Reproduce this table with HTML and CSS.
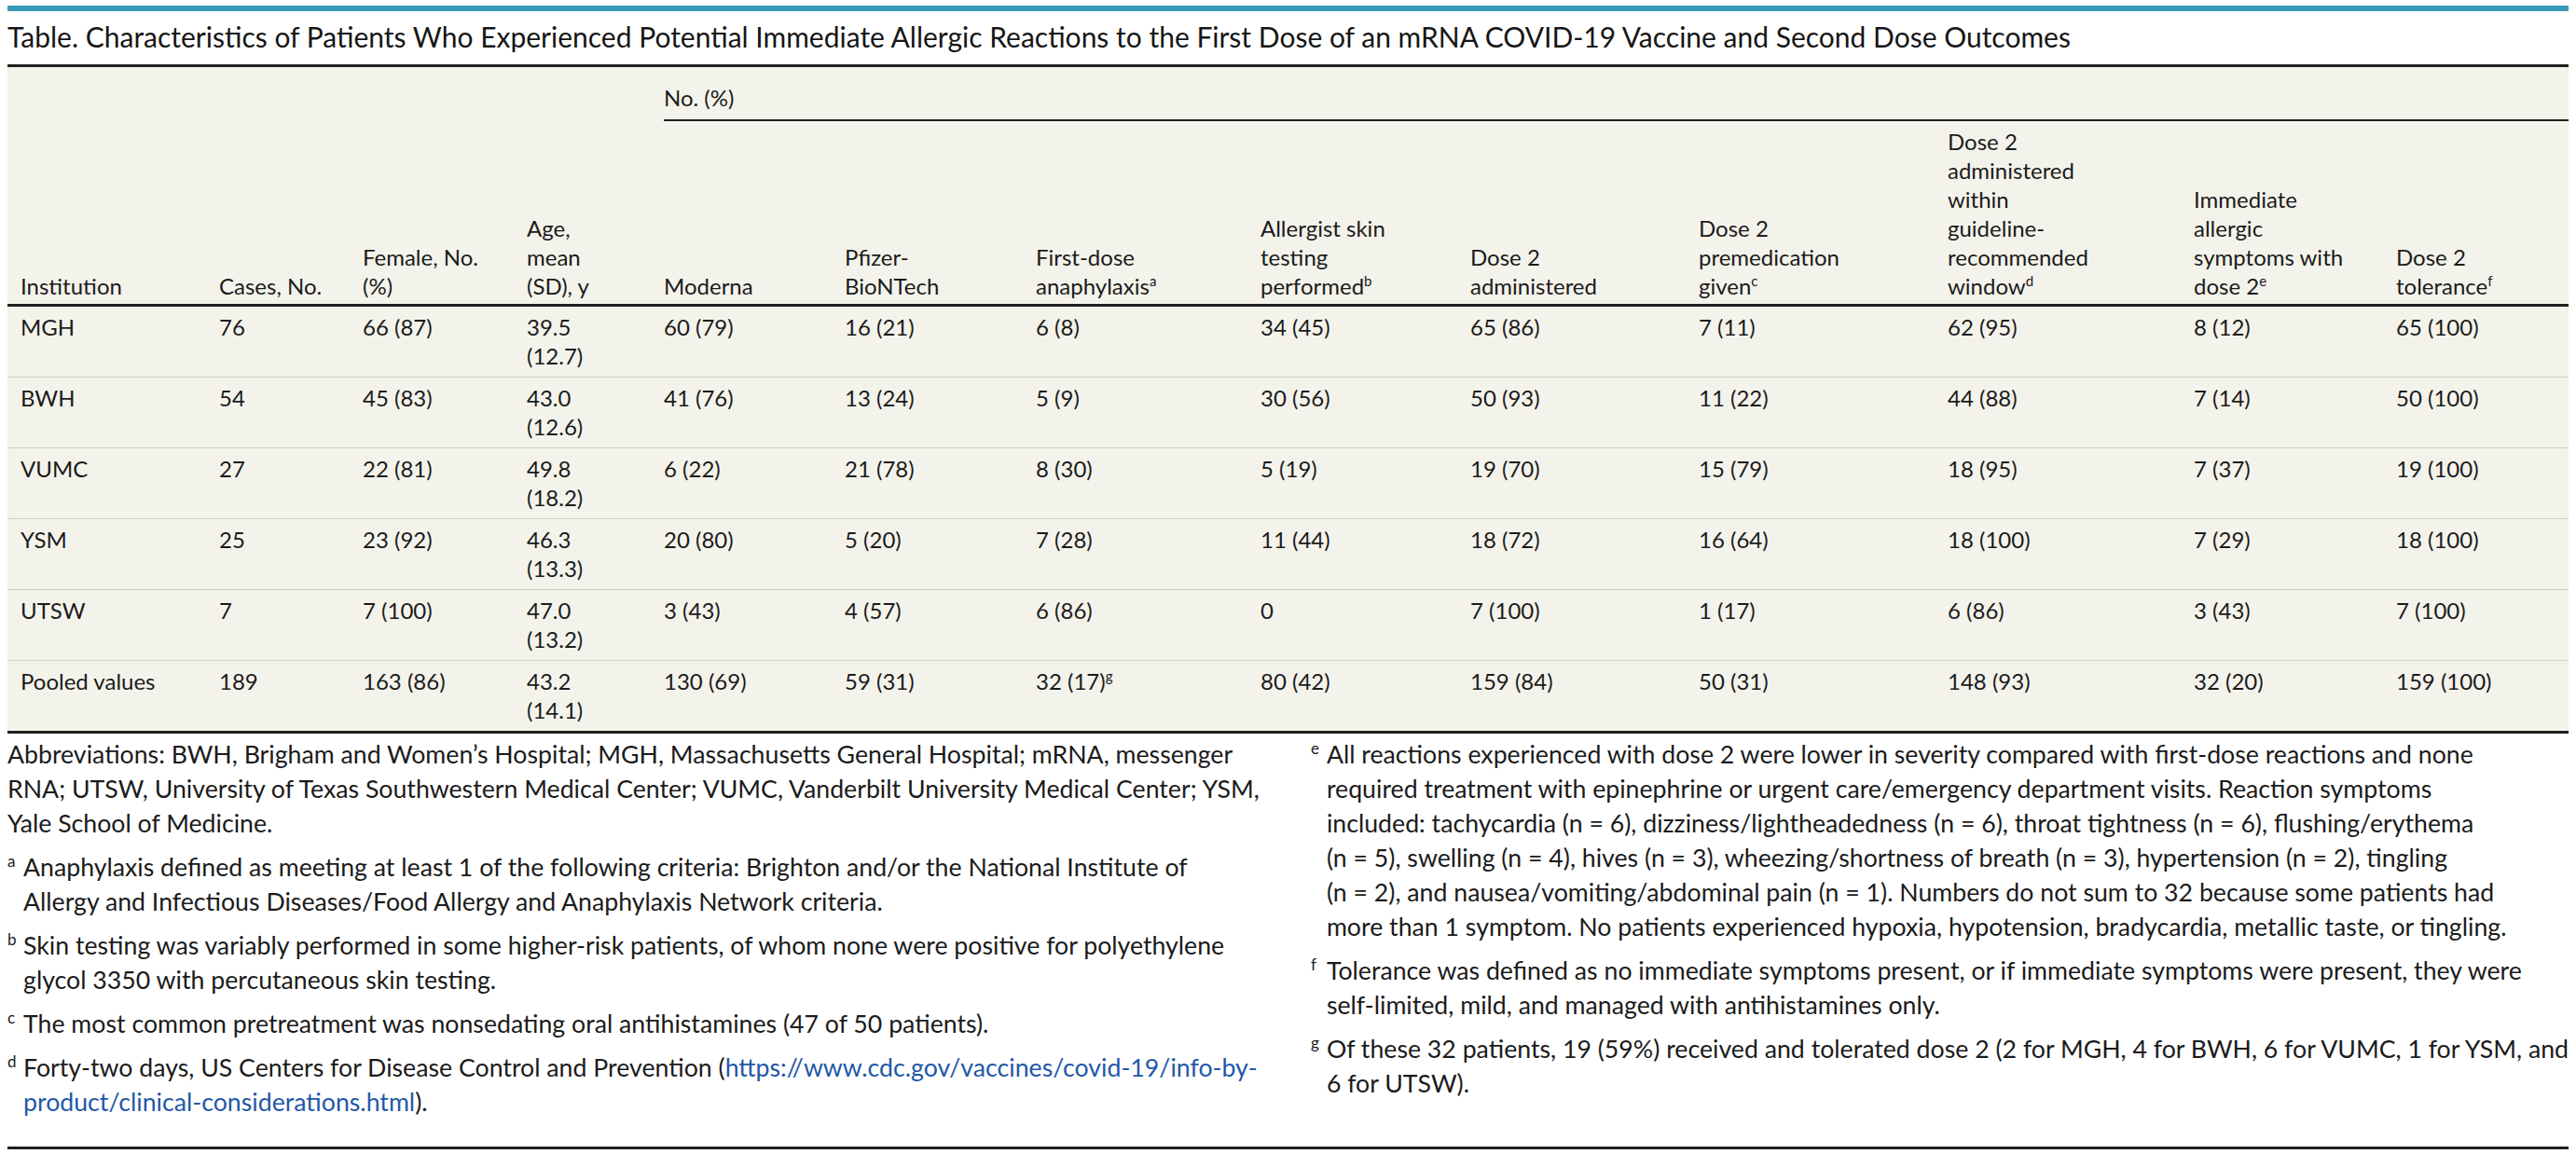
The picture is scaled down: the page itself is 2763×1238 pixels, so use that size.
FILE: index.html
```html
<!DOCTYPE html>
<html lang="en">
<head>
<meta charset="utf-8">
<title>Table</title>
<link rel="stylesheet" href="styles.css">
</head>
<body>
<div class="topbar"></div>
<h1 class="title">Table. Characteristics of Patients Who Experienced Potential Immediate Allergic Reactions to the First Dose of an mRNA COVID-19 Vaccine and Second Dose Outcomes</h1>
<table class="data">
  <colgroup>
    <col class="c-inst">
    <col class="c-cases">
    <col class="c-female">
    <col class="c-age">
    <col class="c-mod">
    <col class="c-pfz">
    <col class="c-ana">
    <col class="c-skin">
    <col class="c-d2">
    <col class="c-pre">
    <col class="c-win">
    <col class="c-imm">
    <col class="c-tol">
  </colgroup>
  <thead>
    <tr class="group-row">
      <th></th><th></th><th></th><th></th>
      <th class="group" colspan="9">No. (%)</th>
    </tr>
    <tr class="head-row">
      <th>Institution</th>
      <th>Cases, No.</th>
      <th>Female, No.<br>(%)</th>
      <th>Age,<br>mean<br>(SD), y</th>
      <th>Moderna</th>
      <th>Pfizer-<br>BioNTech</th>
      <th>First-dose<br>anaphylaxis<sup>a</sup></th>
      <th>Allergist skin<br>testing<br>performed<sup>b</sup></th>
      <th>Dose 2<br>administered</th>
      <th>Dose 2<br>premedication<br>given<sup>c</sup></th>
      <th>Dose 2<br>administered<br>within<br>guideline-<br>recommended<br>window<sup>d</sup></th>
      <th>Immediate<br>allergic<br>symptoms with<br>dose 2<sup>e</sup></th>
      <th>Dose 2<br>tolerance<sup>f</sup></th>
    </tr>
  </thead>
  <tbody>
    <tr>
      <td>MGH</td><td>76</td><td>66 (87)</td><td>39.5<br>(12.7)</td><td>60 (79)</td><td>16 (21)</td><td>6 (8)</td><td>34 (45)</td><td>65 (86)</td><td>7 (11)</td><td>62 (95)</td><td>8 (12)</td><td>65 (100)</td>
    </tr>
    <tr>
      <td>BWH</td><td>54</td><td>45 (83)</td><td>43.0<br>(12.6)</td><td>41 (76)</td><td>13 (24)</td><td>5 (9)</td><td>30 (56)</td><td>50 (93)</td><td>11 (22)</td><td>44 (88)</td><td>7 (14)</td><td>50 (100)</td>
    </tr>
    <tr>
      <td>VUMC</td><td>27</td><td>22 (81)</td><td>49.8<br>(18.2)</td><td>6 (22)</td><td>21 (78)</td><td>8 (30)</td><td>5 (19)</td><td>19 (70)</td><td>15 (79)</td><td>18 (95)</td><td>7 (37)</td><td>19 (100)</td>
    </tr>
    <tr>
      <td>YSM</td><td>25</td><td>23 (92)</td><td>46.3<br>(13.3)</td><td>20 (80)</td><td>5 (20)</td><td>7 (28)</td><td>11 (44)</td><td>18 (72)</td><td>16 (64)</td><td>18 (100)</td><td>7 (29)</td><td>18 (100)</td>
    </tr>
    <tr>
      <td>UTSW</td><td>7</td><td>7 (100)</td><td>47.0<br>(13.2)</td><td>3 (43)</td><td>4 (57)</td><td>6 (86)</td><td>0</td><td>7 (100)</td><td>1 (17)</td><td>6 (86)</td><td>3 (43)</td><td>7 (100)</td>
    </tr>
    <tr>
      <td>Pooled values</td><td>189</td><td>163 (86)</td><td>43.2<br>(14.1)</td><td>130 (69)</td><td>59 (31)</td><td>32 (17)<sup>g</sup></td><td>80 (42)</td><td>159 (84)</td><td>50 (31)</td><td>148 (93)</td><td>32 (20)</td><td>159 (100)</td>
    </tr>
  </tbody>
</table>
<div class="notes">
  <div class="notes-col">
    <p class="abbr">Abbreviations: BWH, Brigham and Women’s Hospital; MGH, Massachusetts General Hospital; mRNA, messenger<br>RNA; UTSW, University of Texas Southwestern Medical Center; VUMC, Vanderbilt University Medical Center; YSM,<br>Yale School of Medicine.</p>
    <p class="fn"><span class="mark">a</span>Anaphylaxis defined as meeting at least 1 of the following criteria: Brighton and/or the National Institute of<br>Allergy and Infectious Diseases/Food Allergy and Anaphylaxis Network criteria.</p>
    <p class="fn"><span class="mark">b</span>Skin testing was variably performed in some higher-risk patients, of whom none were positive for polyethylene<br>glycol 3350 with percutaneous skin testing.</p>
    <p class="fn"><span class="mark">c</span>The most common pretreatment was nonsedating oral antihistamines (47 of 50 patients).</p>
    <p class="fn"><span class="mark">d</span>Forty-two days, US Centers for Disease Control and Prevention (<a class="link" href="#">https://www.cdc.gov/vaccines/covid-19/info-by-<br>product/clinical-considerations.html</a>).</p>
  </div>
  <div class="notes-col">
    <p class="fn"><span class="mark">e</span>All reactions experienced with dose 2 were lower in severity compared with first-dose reactions and none<br>required treatment with epinephrine or urgent care/emergency department visits. Reaction symptoms<br>included: tachycardia (n = 6), dizziness/lightheadedness (n = 6), throat tightness (n = 6), flushing/erythema<br>(n = 5), swelling (n = 4), hives (n = 3), wheezing/shortness of breath (n = 3), hypertension (n = 2), tingling<br>(n = 2), and nausea/vomiting/abdominal pain (n = 1). Numbers do not sum to 32 because some patients had<br>more than 1 symptom. No patients experienced hypoxia, hypotension, bradycardia, metallic taste, or tingling.</p>
    <p class="fn"><span class="mark">f</span>Tolerance was defined as no immediate symptoms present, or if immediate symptoms were present, they were<br>self-limited, mild, and managed with antihistamines only.</p>
    <p class="fn"><span class="mark">g</span>Of these 32 patients, 19 (59%) received and tolerated dose 2 (2 for MGH, 4 for BWH, 6 for VUMC, 1 for YSM, and<br>6 for UTSW).</p>
  </div>
</div>
</body>
</html>
```
FILE: styles.css
```css
html, body {
  background: #ffffff;
}
body {
  margin: 6px 8px 0;
  font-family: Lato, "Open Sans", "Noto Sans", sans-serif;
  color: #1b1b1b;
}
.topbar {
  height: 6px;
  background: #3b9ab6;
}
.title {
  margin: 7px 0 10px;
  font-size: 30px;
  line-height: 40px;
  font-weight: 400;
  color: #161616;
}
.data {
  width: 100%;
  table-layout: fixed;
  border-collapse: separate;
  border-spacing: 0;
  background: #f4f3eb;
  border-top: 3px solid #231f20;
  border-bottom: 3px solid #231f20;
  font-size: 24px;
  line-height: 31px;
}
.c-inst { width: 227px; }
.c-cases { width: 154px; }
.c-female { width: 176px; }
.c-age { width: 147px; }
.c-mod { width: 194px; }
.c-pfz { width: 205px; }
.c-ana { width: 241px; }
.c-skin { width: 225px; }
.c-d2 { width: 245px; }
.c-pre { width: 267px; }
.c-win { width: 264px; }
.c-imm { width: 217px; }
.c-tol { width: 185px; }
.data th,
.data td {
  text-align: left;
  font-weight: 400;
  padding: 0 16px 0 0;
  vertical-align: top;
}
.data th:first-child,
.data td:first-child {
  padding-left: 14px;
}
.group-row th {
  padding-top: 17px;
  padding-bottom: 8px;
}
.group-row th.group {
  border-bottom: 2px solid #231f20;
}
.head-row th {
  vertical-align: bottom;
  padding-top: 6px;
  padding-bottom: 4px;
  border-bottom: 3px solid #231f20;
}
.data tbody td {
  padding-top: 6px;
  padding-bottom: 7px;
  border-bottom: 1px solid #d4d1c4;
}
.data tbody tr:last-child td {
  border-bottom: 0;
}
.data sup {
  font-size: 15px;
  line-height: 0;
  vertical-align: 9px;
}
.notes {
  display: grid;
  grid-template-columns: 1fr 1fr;
  column-gap: 49px;
  padding: 4px 0 29px;
  border-bottom: 3px solid #231f20;
  font-size: 26.7px;
  line-height: 37px;
}
.notes-col {
  display: flex;
  flex-direction: column;
  gap: 10px;
}
.notes p {
  margin: 0;
  white-space: nowrap;
}
.fn {
  padding-left: 17px;
  text-indent: -17px;
}
.fn .mark {
  display: inline-block;
  width: 15px;
  margin-right: 2px;
  text-indent: 0;
  font-size: 17px;
  line-height: 1;
  vertical-align: 10px;
}
.link {
  color: #1f58a8;
  text-decoration: none;
}
```
